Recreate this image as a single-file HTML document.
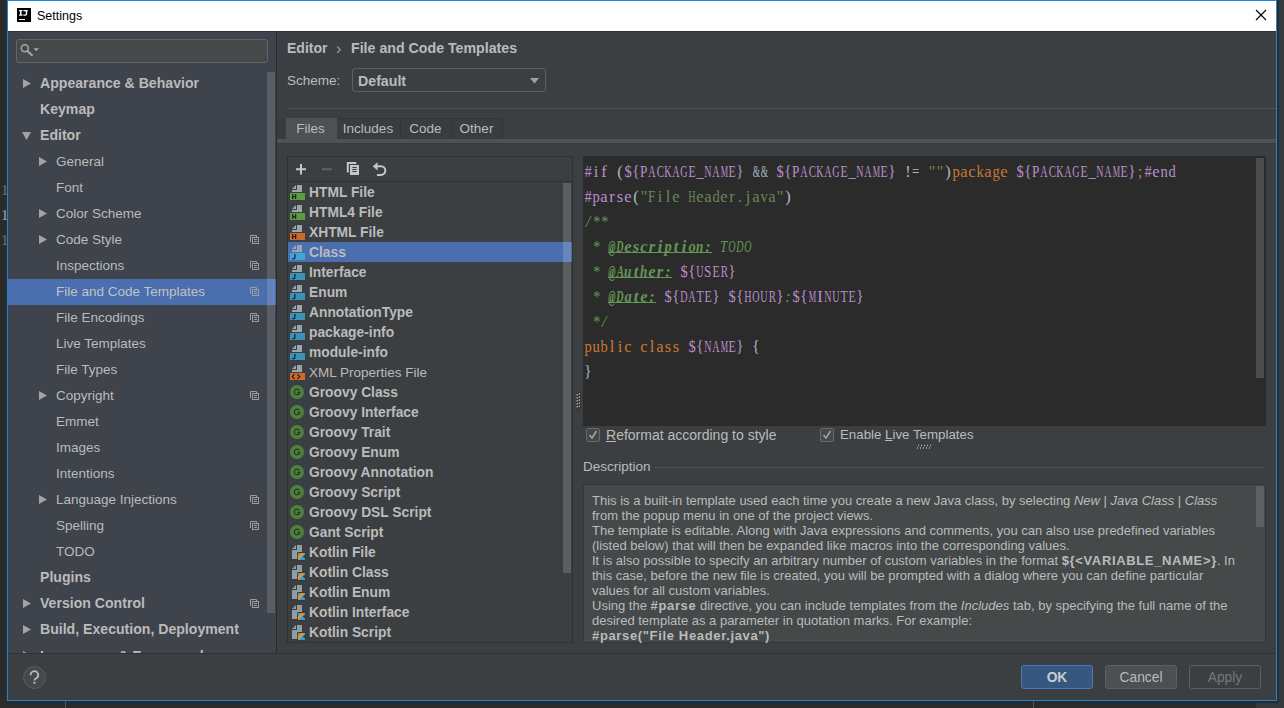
<!DOCTYPE html>
<html><head><meta charset="utf-8">
<style>
*{margin:0;padding:0;box-sizing:border-box}
html,body{width:1284px;height:708px;overflow:hidden;background:#2b2b2b;font-family:"Liberation Sans",sans-serif;color:#bbbbbb}
.a{position:absolute}
.t{position:absolute;white-space:nowrap}
.tr{position:absolute;left:8px;width:268px;height:26px;font-size:13.5px;line-height:26px;white-space:nowrap}
.tr.b{font-weight:bold;font-size:14.1px}
.tr.sel{background:#4b6eaf;color:#c2c2c2}
.tri{position:absolute;width:0;height:0;border-top:4.5px solid transparent;border-bottom:4.5px solid transparent;border-left:8px solid #a2a4a7;top:8px}
.trd{position:absolute;width:0;height:0;border-left:4.5px solid transparent;border-right:4.5px solid transparent;border-top:8px solid #a2a4a7;top:9px}
.pi{position:absolute;left:242px;top:8px}
.li{position:absolute;left:288px;width:284px;height:20px;font-size:13.8px;line-height:20px;font-weight:bold;white-space:nowrap}
.li.n{font-weight:normal;font-size:13.5px}
.li.sel{background:#4b6eaf}
.fi{position:absolute;left:2px;top:2px}
.code2{position:absolute;left:584px;font-family:"Liberation Serif",serif;font-size:16.5px;line-height:25px;white-space:pre;color:#a9b7c6}
.code2 b{font-weight:normal;display:inline-flex;justify-content:center;width:8px;overflow:visible}
.code2 i{font-style:normal;display:inline-block}
.code2 .cm i,.code2 .tag i{font-style:italic}
.code2 .tag i{font-weight:bold}
.dir{color:#b98fcb}
.kw{color:#cc7832}
.str{color:#6a8759}
.cm{color:#629755;font-style:italic}
.tag{color:#629755;font-weight:bold;font-style:italic;text-decoration:underline;text-decoration-skip-ink:none}
.desc{position:absolute;left:592px;font-size:13px;line-height:15px;white-space:nowrap;color:#bbbbbb}
.desc b{letter-spacing:0.65px}
</style></head><body>

<div class="t" style="left:1px;top:184px;font-family:'Liberation Serif',serif;font-size:15px;line-height:12px;color:#707070">1</div>
<div class="t" style="left:1px;top:209px;font-family:'Liberation Serif',serif;font-size:15px;line-height:12px;color:#a8a8a8">1</div>
<div class="t" style="left:1px;top:234px;font-family:'Liberation Serif',serif;font-size:15px;line-height:12px;color:#707070">1</div>
<div class="a" style="left:1277px;top:0;width:7px;height:708px;background:#37393b"></div>
<div class="a" style="left:1277px;top:0;width:2px;height:703px;background:#2c2d2e"></div>
<div class="a" style="left:1256px;top:701px;width:28px;height:7px;background:#37393b"></div>
<div class="a" style="left:7px;top:701px;width:1272px;height:2px;background:#2a2b2c"></div>
<div class="a" style="left:7px;top:0;width:1270px;height:701px;border:1px solid #1c87d9;background:#3c3f41"></div>
<div class="a" style="left:8px;top:1px;width:1268px;height:30px;background:#fff"></div>
<div class="a" style="left:17px;top:8px;width:14px;height:14px;background:#000"></div>
<svg class="a" style="left:17px;top:8px" width="14" height="14" viewBox="0 0 14 14"><path d="M2.1 2h3.3v1.2h-0.9v3.4h0.9v1.2H2.1V6.6h0.9V3.2h-0.9z M6.4 2h4.3v1.2h-0.5v2.9q0 1.7-1.7 1.7H6.3V6.6h1.8q0.6 0 0.6-0.6V3.2H6.4z" fill="#fff"/></svg>
<div class="a" style="left:19px;top:19px;width:6px;height:1px;background:#fff"></div>
<div class="t" style="left:37px;top:9px;font-size:12.5px;line-height:15px;color:#000">Settings</div>
<svg class="a" style="left:1255px;top:9px" width="12" height="12" viewBox="0 0 12 12"><path d="M1 1L11 11M11 1L1 11" stroke="#000" stroke-width="1.1"/></svg>
<div class="a" style="left:8px;top:31px;width:1268px;height:1px;background:#2f3133"></div>
<div class="a" style="left:8px;top:32px;width:268px;height:621px;background:#3e434c"></div>
<div class="a" style="left:276px;top:32px;width:1px;height:621px;background:#2b2b2b"></div>
<div class="a" style="left:8px;top:653px;width:1268px;height:1px;background:#2f3133"></div>
<div class="a" style="left:16px;top:39px;width:252px;height:24px;background:#45494a;border:1px solid #646464;border-radius:3px"></div>
<svg class="a" style="left:20px;top:43px" width="20" height="16" viewBox="0 0 20 16"><circle cx="4.8" cy="5.2" r="3.5" fill="none" stroke="#a8a8a8" stroke-width="1.5"/><path d="M7.4 7.9L12.6 12.8" stroke="#a8a8a8" stroke-width="2"/><path d="M13.5 5.3h5.5l-2.75 3z" fill="#a8a8a8"/></svg>
<div class="tr b" style="top:71px"><svg class="a" style="left:15px;top:8px" width="8" height="9" viewBox="0 0 8 9"><path d="M0 0L8 4.5L0 9z" fill="#a2a4a7"/></svg><span class="t" style="left:32px;top:-1px">Appearance &amp; Behavior</span></div>
<div class="tr b" style="top:97px"><span class="t" style="left:32px;top:-1px">Keymap</span></div>
<div class="tr b" style="top:123px"><svg class="a" style="left:14px;top:9px" width="9" height="8" viewBox="0 0 9 8"><path d="M0 0L9 0L4.5 8z" fill="#a2a4a7"/></svg><span class="t" style="left:32px;top:-1px">Editor</span></div>
<div class="tr" style="top:149px"><svg class="a" style="left:31px;top:8px" width="8" height="9" viewBox="0 0 8 9"><path d="M0 0L8 4.5L0 9z" fill="#a2a4a7"/></svg><span class="t" style="left:48px;top:0px">General</span></div>
<div class="tr" style="top:175px"><span class="t" style="left:48px;top:0px">Font</span></div>
<div class="tr" style="top:201px"><svg class="a" style="left:31px;top:8px" width="8" height="9" viewBox="0 0 8 9"><path d="M0 0L8 4.5L0 9z" fill="#a2a4a7"/></svg><span class="t" style="left:48px;top:0px">Color Scheme</span></div>
<div class="tr" style="top:227px"><svg class="a" style="left:31px;top:8px" width="8" height="9" viewBox="0 0 8 9"><path d="M0 0L8 4.5L0 9z" fill="#a2a4a7"/></svg><svg class="pi" width="11" height="11" viewBox="0 0 11 11"><path d="M0.5 7V0.5H6.5V2.5" fill="none" stroke="#9a9ea3" stroke-width="1"/><rect x="2.5" y="2.5" width="6" height="6" fill="none" stroke="#9a9ea3" stroke-width="1"/><path d="M4 4.5h3M4 6.5h3" stroke="#9a9ea3" stroke-width="1"/></svg><span class="t" style="left:48px;top:0px">Code Style</span></div>
<div class="tr" style="top:253px"><svg class="pi" width="11" height="11" viewBox="0 0 11 11"><path d="M0.5 7V0.5H6.5V2.5" fill="none" stroke="#9a9ea3" stroke-width="1"/><rect x="2.5" y="2.5" width="6" height="6" fill="none" stroke="#9a9ea3" stroke-width="1"/><path d="M4 4.5h3M4 6.5h3" stroke="#9a9ea3" stroke-width="1"/></svg><span class="t" style="left:48px;top:0px">Inspections</span></div>
<div class="tr sel" style="top:279px"><svg class="pi" width="11" height="11" viewBox="0 0 11 11"><path d="M0.5 7V0.5H6.5V2.5" fill="none" stroke="#9a9ea3" stroke-width="1"/><rect x="2.5" y="2.5" width="6" height="6" fill="none" stroke="#9a9ea3" stroke-width="1"/><path d="M4 4.5h3M4 6.5h3" stroke="#9a9ea3" stroke-width="1"/></svg><span class="t" style="left:48px;top:0px">File and Code Templates</span></div>
<div class="tr" style="top:305px"><svg class="pi" width="11" height="11" viewBox="0 0 11 11"><path d="M0.5 7V0.5H6.5V2.5" fill="none" stroke="#9a9ea3" stroke-width="1"/><rect x="2.5" y="2.5" width="6" height="6" fill="none" stroke="#9a9ea3" stroke-width="1"/><path d="M4 4.5h3M4 6.5h3" stroke="#9a9ea3" stroke-width="1"/></svg><span class="t" style="left:48px;top:0px">File Encodings</span></div>
<div class="tr" style="top:331px"><span class="t" style="left:48px;top:0px">Live Templates</span></div>
<div class="tr" style="top:357px"><span class="t" style="left:48px;top:0px">File Types</span></div>
<div class="tr" style="top:383px"><svg class="a" style="left:31px;top:8px" width="8" height="9" viewBox="0 0 8 9"><path d="M0 0L8 4.5L0 9z" fill="#a2a4a7"/></svg><svg class="pi" width="11" height="11" viewBox="0 0 11 11"><path d="M0.5 7V0.5H6.5V2.5" fill="none" stroke="#9a9ea3" stroke-width="1"/><rect x="2.5" y="2.5" width="6" height="6" fill="none" stroke="#9a9ea3" stroke-width="1"/><path d="M4 4.5h3M4 6.5h3" stroke="#9a9ea3" stroke-width="1"/></svg><span class="t" style="left:48px;top:0px">Copyright</span></div>
<div class="tr" style="top:409px"><span class="t" style="left:48px;top:0px">Emmet</span></div>
<div class="tr" style="top:435px"><span class="t" style="left:48px;top:0px">Images</span></div>
<div class="tr" style="top:461px"><span class="t" style="left:48px;top:0px">Intentions</span></div>
<div class="tr" style="top:487px"><svg class="a" style="left:31px;top:8px" width="8" height="9" viewBox="0 0 8 9"><path d="M0 0L8 4.5L0 9z" fill="#a2a4a7"/></svg><svg class="pi" width="11" height="11" viewBox="0 0 11 11"><path d="M0.5 7V0.5H6.5V2.5" fill="none" stroke="#9a9ea3" stroke-width="1"/><rect x="2.5" y="2.5" width="6" height="6" fill="none" stroke="#9a9ea3" stroke-width="1"/><path d="M4 4.5h3M4 6.5h3" stroke="#9a9ea3" stroke-width="1"/></svg><span class="t" style="left:48px;top:0px">Language Injections</span></div>
<div class="tr" style="top:513px"><svg class="pi" width="11" height="11" viewBox="0 0 11 11"><path d="M0.5 7V0.5H6.5V2.5" fill="none" stroke="#9a9ea3" stroke-width="1"/><rect x="2.5" y="2.5" width="6" height="6" fill="none" stroke="#9a9ea3" stroke-width="1"/><path d="M4 4.5h3M4 6.5h3" stroke="#9a9ea3" stroke-width="1"/></svg><span class="t" style="left:48px;top:0px">Spelling</span></div>
<div class="tr" style="top:539px"><span class="t" style="left:48px;top:0px">TODO</span></div>
<div class="tr b" style="top:565px"><span class="t" style="left:32px;top:-1px">Plugins</span></div>
<div class="tr b" style="top:591px"><svg class="a" style="left:15px;top:8px" width="8" height="9" viewBox="0 0 8 9"><path d="M0 0L8 4.5L0 9z" fill="#a2a4a7"/></svg><svg class="pi" width="11" height="11" viewBox="0 0 11 11"><path d="M0.5 7V0.5H6.5V2.5" fill="none" stroke="#9a9ea3" stroke-width="1"/><rect x="2.5" y="2.5" width="6" height="6" fill="none" stroke="#9a9ea3" stroke-width="1"/><path d="M4 4.5h3M4 6.5h3" stroke="#9a9ea3" stroke-width="1"/></svg><span class="t" style="left:32px;top:-1px">Version Control</span></div>
<div class="tr b" style="top:617px"><svg class="a" style="left:15px;top:8px" width="8" height="9" viewBox="0 0 8 9"><path d="M0 0L8 4.5L0 9z" fill="#a2a4a7"/></svg><span class="t" style="left:32px;top:-1px">Build, Execution, Deployment</span></div>
<div class="tr b" style="top:643px"><svg class="a" style="left:15px;top:8px" width="8" height="9" viewBox="0 0 8 9"><path d="M0 0L8 4.5L0 9z" fill="#a2a4a7"/></svg><span class="t" style="left:32px;top:0px">Languages &amp; Frameworks</span></div>
<div class="a" style="left:8px;top:653px;width:1268px;height:47px;background:#3c3f41"></div>
<div class="a" style="left:8px;top:653px;width:1268px;height:1px;background:#2f3133"></div>
<div class="a" style="left:267px;top:72px;width:8px;height:541px;background:rgba(255,255,255,0.14)"></div>
<div class="t" style="left:287px;top:40px;font-weight:bold;font-size:14px;line-height:16px">Editor</div>
<div class="t" style="left:336px;top:40px;font-size:16px;line-height:18px;color:#a0a0a0">&#8250;</div>
<div class="t" style="left:351px;top:40px;font-weight:bold;font-size:14.2px;line-height:16px">File and Code Templates</div>
<div class="t" style="left:287px;top:73px;font-size:13.5px;line-height:16px">Scheme:</div>
<div class="a" style="left:352px;top:68px;width:194px;height:24px;background:#3c3f41;border:1px solid #5e6060;border-radius:3px"></div>
<div class="t" style="left:358px;top:73px;font-weight:bold;font-size:14.2px;line-height:16px">Default</div>
<svg class="a" style="left:530px;top:78px" width="10" height="6" viewBox="0 0 10 6"><path d="M0 0h9l-4.5 5.5z" fill="#a0a0a0"/></svg>
<div class="a" style="left:287px;top:108px;width:989px;height:1px;background:#515151"></div>
<div class="a" style="left:277px;top:139px;width:999px;height:4px;background:#4e5254"></div>
<div class="a" style="left:277px;top:143px;width:999px;height:1px;background:#383a3c"></div>
<div class="a" style="left:277px;top:118px;width:9px;height:21px;background:#393c3e"></div>
<div class="a" style="left:286px;top:118px;width:51px;height:21px;background:#4e5254"></div>
<div class="t" style="left:285px;top:118px;width:51px;text-align:center;font-size:13.5px;line-height:22px">Files</div>
<div class="a" style="left:337px;top:118px;width:64px;height:21px;background:#3a3d3f;border:1px solid #323436;border-bottom:none;border-left:none"></div>
<div class="t" style="left:336px;top:118px;width:64px;text-align:center;font-size:13.5px;line-height:22px">Includes</div>
<div class="a" style="left:401px;top:118px;width:51px;height:21px;background:#3a3d3f;border:1px solid #323436;border-bottom:none;border-left:none"></div>
<div class="t" style="left:400px;top:118px;width:51px;text-align:center;font-size:13.5px;line-height:22px">Code</div>
<div class="a" style="left:452px;top:118px;width:51px;height:21px;background:#3a3d3f;border:1px solid #323436;border-bottom:none;border-left:none"></div>
<div class="t" style="left:451px;top:118px;width:51px;text-align:center;font-size:13.5px;line-height:22px">Other</div>
<div class="a" style="left:287px;top:156px;width:286px;height:487px;border:1px solid #2f3133;background:#3c3f41"></div>
<div class="a" style="left:288px;top:181px;width:284px;height:1px;background:#2f3133"></div>
<svg class="a" style="left:290px;top:158px" width="102" height="22" viewBox="0 0 102 22"><path d="M6 11.2h10M11 6v10.4" stroke="#c6c6c6" stroke-width="2"/><path d="M32 11.2h9.6" stroke="#606366" stroke-width="2"/><path d="M57.8 14.5V5H66.2" fill="none" stroke="#c6c6c6" stroke-width="2"/><rect x="60" y="7" width="9" height="10" fill="#c6c6c6"/><path d="M62.3 9.5h4.4M62.3 11.5h4.4M62.3 13.5h4.4" stroke="#3c3f41" stroke-width="1"/><path d="M82.8 8.3L87.6 4.2V12.4z" fill="#c6c6c6"/><path d="M86.5 8.3H91A4.3 4.3 0 0 1 91 16.9H87" fill="none" stroke="#c6c6c6" stroke-width="2"/></svg>
<div class="li" style="top:182px"><svg class="fi" width="16" height="17" viewBox="0 0 16 17"><path d="M2 5L6 1V5z M7 1H12V8H2V6H7z" fill="#9aa5ad"/><rect x="0" y="9" width="15" height="7" fill="#5b9c43"/><path d="M2 10h1.3v5H2z M5 10h1.3v5H5z M3 12h2v1.2H3z" fill="#1e2a1a"/></svg><span class="t" style="left:21px;top:1px">HTML File</span></div>
<div class="li" style="top:202px"><svg class="fi" width="16" height="17" viewBox="0 0 16 17"><path d="M2 5L6 1V5z M7 1H12V8H2V6H7z" fill="#9aa5ad"/><rect x="0" y="9" width="15" height="7" fill="#5b9c43"/><path d="M2 10h1.3v5H2z M5 10h1.3v5H5z M3 12h2v1.2H3z" fill="#1e2a1a"/></svg><span class="t" style="left:21px;top:1px">HTML4 File</span></div>
<div class="li" style="top:222px"><svg class="fi" width="16" height="17" viewBox="0 0 16 17"><path d="M2 5L6 1V5z M7 1H12V8H2V6H7z" fill="#9aa5ad"/><rect x="0" y="9" width="15" height="7" fill="#cc6a2c"/><path d="M2 10h1.3v5H2z M5 10h1.3v5H5z M3 12h2v1.2H3z" fill="#2a1a10"/></svg><span class="t" style="left:21px;top:1px">XHTML File</span></div>
<div class="li sel" style="top:242px"><svg class="fi" width="16" height="17" viewBox="0 0 16 17"><path d="M2 5L6 1V5z M7 1H12V8H2V6H7z" fill="#9aa5ad"/><rect x="0" y="9" width="15" height="7" fill="#42a3d6"/><path d="M4.3 10h1.3v3.6q0 1.6-1.6 1.6H2.2v-1.2h1.4q0.7 0 0.7-0.6z" fill="#12283a"/></svg><span class="t" style="left:21px;top:1px">Class</span></div>
<div class="li" style="top:262px"><svg class="fi" width="16" height="17" viewBox="0 0 16 17"><path d="M2 5L6 1V5z M7 1H12V8H2V6H7z" fill="#9aa5ad"/><rect x="0" y="9" width="15" height="7" fill="#3a93b6"/><path d="M4.3 10h1.3v3.6q0 1.6-1.6 1.6H2.2v-1.2h1.4q0.7 0 0.7-0.6z" fill="#12283a"/></svg><span class="t" style="left:21px;top:1px">Interface</span></div>
<div class="li" style="top:282px"><svg class="fi" width="16" height="17" viewBox="0 0 16 17"><path d="M2 5L6 1V5z M7 1H12V8H2V6H7z" fill="#9aa5ad"/><rect x="0" y="9" width="15" height="7" fill="#3a93b6"/><path d="M4.3 10h1.3v3.6q0 1.6-1.6 1.6H2.2v-1.2h1.4q0.7 0 0.7-0.6z" fill="#12283a"/></svg><span class="t" style="left:21px;top:1px">Enum</span></div>
<div class="li" style="top:302px"><svg class="fi" width="16" height="17" viewBox="0 0 16 17"><path d="M2 5L6 1V5z M7 1H12V8H2V6H7z" fill="#9aa5ad"/><rect x="0" y="9" width="15" height="7" fill="#3a93b6"/><path d="M4.3 10h1.3v3.6q0 1.6-1.6 1.6H2.2v-1.2h1.4q0.7 0 0.7-0.6z" fill="#12283a"/></svg><span class="t" style="left:21px;top:1px">AnnotationType</span></div>
<div class="li" style="top:322px"><svg class="fi" width="16" height="17" viewBox="0 0 16 17"><path d="M2 5L6 1V5z M7 1H12V8H2V6H7z" fill="#9aa5ad"/><rect x="0" y="9" width="15" height="7" fill="#3a93b6"/><path d="M4.3 10h1.3v3.6q0 1.6-1.6 1.6H2.2v-1.2h1.4q0.7 0 0.7-0.6z" fill="#12283a"/></svg><span class="t" style="left:21px;top:1px">package-info</span></div>
<div class="li" style="top:342px"><svg class="fi" width="16" height="17" viewBox="0 0 16 17"><path d="M2 5L6 1V5z M7 1H12V8H2V6H7z" fill="#9aa5ad"/><rect x="0" y="9" width="15" height="7" fill="#3a93b6"/><path d="M4.3 10h1.3v3.6q0 1.6-1.6 1.6H2.2v-1.2h1.4q0.7 0 0.7-0.6z" fill="#12283a"/></svg><span class="t" style="left:21px;top:1px">module-info</span></div>
<div class="li n" style="top:362px"><svg class="fi" width="16" height="17" viewBox="0 0 16 17"><path d="M2 5L6 1V5z M7 1H12V8H2V6H7z" fill="#9aa5ad"/><rect x="0" y="9" width="15" height="7" fill="#cc6a2c"/><path d="M4.6 10.2L2.2 12.6L4.6 15 M7.4 10.2L9.8 12.6L7.4 15" fill="none" stroke="#2a1a10" stroke-width="1.1"/></svg><span class="t" style="left:21px;top:1px">XML Properties File</span></div>
<div class="li" style="top:382px"><svg class="fi" width="16" height="17" viewBox="0 0 16 17"><circle cx="7" cy="8" r="7" fill="#4e803e"/><path d="M9.4 6.4A2.8 2.8 0 1 0 9.8 8.3H7.4" fill="none" stroke="#243a1d" stroke-width="1.2"/></svg><span class="t" style="left:21px;top:1px">Groovy Class</span></div>
<div class="li" style="top:402px"><svg class="fi" width="16" height="17" viewBox="0 0 16 17"><circle cx="7" cy="8" r="7" fill="#4e803e"/><path d="M9.4 6.4A2.8 2.8 0 1 0 9.8 8.3H7.4" fill="none" stroke="#243a1d" stroke-width="1.2"/></svg><span class="t" style="left:21px;top:1px">Groovy Interface</span></div>
<div class="li" style="top:422px"><svg class="fi" width="16" height="17" viewBox="0 0 16 17"><circle cx="7" cy="8" r="7" fill="#4e803e"/><path d="M9.4 6.4A2.8 2.8 0 1 0 9.8 8.3H7.4" fill="none" stroke="#243a1d" stroke-width="1.2"/></svg><span class="t" style="left:21px;top:1px">Groovy Trait</span></div>
<div class="li" style="top:442px"><svg class="fi" width="16" height="17" viewBox="0 0 16 17"><circle cx="7" cy="8" r="7" fill="#4e803e"/><path d="M9.4 6.4A2.8 2.8 0 1 0 9.8 8.3H7.4" fill="none" stroke="#243a1d" stroke-width="1.2"/></svg><span class="t" style="left:21px;top:1px">Groovy Enum</span></div>
<div class="li" style="top:462px"><svg class="fi" width="16" height="17" viewBox="0 0 16 17"><circle cx="7" cy="8" r="7" fill="#4e803e"/><path d="M9.4 6.4A2.8 2.8 0 1 0 9.8 8.3H7.4" fill="none" stroke="#243a1d" stroke-width="1.2"/></svg><span class="t" style="left:21px;top:1px">Groovy Annotation</span></div>
<div class="li" style="top:482px"><svg class="fi" width="16" height="17" viewBox="0 0 16 17"><circle cx="7" cy="8" r="7" fill="#4e803e"/><path d="M9.4 6.4A2.8 2.8 0 1 0 9.8 8.3H7.4" fill="none" stroke="#243a1d" stroke-width="1.2"/></svg><span class="t" style="left:21px;top:1px">Groovy Script</span></div>
<div class="li" style="top:502px"><svg class="fi" width="16" height="17" viewBox="0 0 16 17"><circle cx="7" cy="8" r="7" fill="#4e803e"/><path d="M9.4 6.4A2.8 2.8 0 1 0 9.8 8.3H7.4" fill="none" stroke="#243a1d" stroke-width="1.2"/></svg><span class="t" style="left:21px;top:1px">Groovy DSL Script</span></div>
<div class="li" style="top:522px"><svg class="fi" width="16" height="17" viewBox="0 0 16 17"><circle cx="7" cy="8" r="7" fill="#4e803e"/><path d="M9.4 6.4A2.8 2.8 0 1 0 9.8 8.3H7.4" fill="none" stroke="#243a1d" stroke-width="1.2"/></svg><span class="t" style="left:21px;top:1px">Gant Script</span></div>
<div class="li" style="top:542px"><svg class="fi" width="16" height="17" viewBox="0 0 16 17"><path d="M2 5L6 1V5z M7 1H12V8H7.5V15H2V6H7z" fill="#939ca3"/><rect x="7.5" y="8.5" width="8" height="8" fill="#2e3032"/><rect x="8" y="9" width="7" height="7" fill="#1fa3e6"/><path d="M8 12.4L11 9H15L8.8 16H8z" fill="#f7901e"/><path d="M15 10.9L12.9 12.5L15 14.1z" fill="#2c2e30"/></svg><span class="t" style="left:21px;top:1px">Kotlin File</span></div>
<div class="li" style="top:562px"><svg class="fi" width="16" height="17" viewBox="0 0 16 17"><path d="M2 5L6 1V5z M7 1H12V8H7.5V15H2V6H7z" fill="#939ca3"/><rect x="7.5" y="8.5" width="8" height="8" fill="#2e3032"/><rect x="8" y="9" width="7" height="7" fill="#1fa3e6"/><path d="M8 12.4L11 9H15L8.8 16H8z" fill="#f7901e"/><path d="M15 10.9L12.9 12.5L15 14.1z" fill="#2c2e30"/></svg><span class="t" style="left:21px;top:1px">Kotlin Class</span></div>
<div class="li" style="top:582px"><svg class="fi" width="16" height="17" viewBox="0 0 16 17"><path d="M2 5L6 1V5z M7 1H12V8H7.5V15H2V6H7z" fill="#939ca3"/><rect x="7.5" y="8.5" width="8" height="8" fill="#2e3032"/><rect x="8" y="9" width="7" height="7" fill="#1fa3e6"/><path d="M8 12.4L11 9H15L8.8 16H8z" fill="#f7901e"/><path d="M15 10.9L12.9 12.5L15 14.1z" fill="#2c2e30"/></svg><span class="t" style="left:21px;top:1px">Kotlin Enum</span></div>
<div class="li" style="top:602px"><svg class="fi" width="16" height="17" viewBox="0 0 16 17"><path d="M2 5L6 1V5z M7 1H12V8H7.5V15H2V6H7z" fill="#939ca3"/><rect x="7.5" y="8.5" width="8" height="8" fill="#2e3032"/><rect x="8" y="9" width="7" height="7" fill="#1fa3e6"/><path d="M8 12.4L11 9H15L8.8 16H8z" fill="#f7901e"/><path d="M15 10.9L12.9 12.5L15 14.1z" fill="#2c2e30"/></svg><span class="t" style="left:21px;top:1px">Kotlin Interface</span></div>
<div class="li" style="top:622px"><svg class="fi" width="16" height="17" viewBox="0 0 16 17"><path d="M2 5L6 1V5z M7 1H12V8H7.5V15H2V6H7z" fill="#939ca3"/><rect x="7.5" y="8.5" width="8" height="8" fill="#2e3032"/><rect x="8" y="9" width="7" height="7" fill="#1fa3e6"/><path d="M8 12.4L11 9H15L8.8 16H8z" fill="#f7901e"/><path d="M15 10.9L12.9 12.5L15 14.1z" fill="#2c2e30"/></svg><span class="t" style="left:21px;top:1px">Kotlin Script</span></div>
<div class="a" style="left:563px;top:183px;width:8px;height:390px;background:rgba(255,255,255,0.17)"></div>
<div class="a" style="left:583px;top:156px;width:683px;height:270px;background:#2b2b2b"></div>
<div class="a" style="left:1256px;top:158px;width:8px;height:220px;background:#4a4c4e"></div>
<div class="a" style="left:608px;top:252px;width:104px;height:1px;background:#629755"></div>
<div class="a" style="left:608px;top:277px;width:64px;height:1px;background:#629755"></div>
<div class="a" style="left:608px;top:302px;width:48px;height:1px;background:#629755"></div>
<div class="code2" style="top:159px"><span class="dir"><b class="c"><i style="transform:scaleX(0.88)">#</i></b><b class="c"><i>i</i></b><b class="c"><i>f</i></b></span><b class="c"> </b><b class="c"><i>(</i></b><span class="dir"><b class="c"><i style="transform:scaleX(0.88)">$</i></b><b class="c"><i style="transform:scaleX(0.92)">{</i></b><b class="c"><i style="transform:scaleX(0.80)">P</i></b><b class="c"><i style="transform:scaleX(0.61)">A</i></b><b class="c"><i style="transform:scaleX(0.66)">C</i></b><b class="c"><i style="transform:scaleX(0.61)">K</i></b><b class="c"><i style="transform:scaleX(0.61)">A</i></b><b class="c"><i style="transform:scaleX(0.61)">G</i></b><b class="c"><i style="transform:scaleX(0.72)">E</i></b><b class="c"><i style="transform:scaleX(0.88)">_</i></b><b class="c"><i style="transform:scaleX(0.61)">N</i></b><b class="c"><i style="transform:scaleX(0.61)">A</i></b><b class="c"><i style="transform:scaleX(0.50)">M</i></b><b class="c"><i style="transform:scaleX(0.72)">E</i></b><b class="c"><i style="transform:scaleX(0.92)">}</i></b></span><b class="c"> </b><b class="c"><i style="transform:scaleX(0.57)">&amp;</i></b><b class="c"><i style="transform:scaleX(0.57)">&amp;</i></b><b class="c"> </b><span class="dir"><b class="c"><i style="transform:scaleX(0.88)">$</i></b><b class="c"><i style="transform:scaleX(0.92)">{</i></b><b class="c"><i style="transform:scaleX(0.80)">P</i></b><b class="c"><i style="transform:scaleX(0.61)">A</i></b><b class="c"><i style="transform:scaleX(0.66)">C</i></b><b class="c"><i style="transform:scaleX(0.61)">K</i></b><b class="c"><i style="transform:scaleX(0.61)">A</i></b><b class="c"><i style="transform:scaleX(0.61)">G</i></b><b class="c"><i style="transform:scaleX(0.72)">E</i></b><b class="c"><i style="transform:scaleX(0.88)">_</i></b><b class="c"><i style="transform:scaleX(0.61)">N</i></b><b class="c"><i style="transform:scaleX(0.61)">A</i></b><b class="c"><i style="transform:scaleX(0.50)">M</i></b><b class="c"><i style="transform:scaleX(0.72)">E</i></b><b class="c"><i style="transform:scaleX(0.92)">}</i></b></span><b class="c"> </b><b class="c"><i>!</i></b><b class="c"><i style="transform:scaleX(0.78)">=</i></b><b class="c"> </b><span class="str"><b class="c"><i>&quot;</i></b><b class="c"><i>&quot;</i></b></span><b class="c"><i>)</i></b><span class="kw"><b class="c"><i style="transform:scaleX(0.88)">p</i></b><b class="c"><i>a</i></b><b class="c"><i>c</i></b><b class="c"><i style="transform:scaleX(0.88)">k</i></b><b class="c"><i>a</i></b><b class="c"><i style="transform:scaleX(0.88)">g</i></b><b class="c"><i>e</i></b></span><b class="c"> </b><span class="dir"><b class="c"><i style="transform:scaleX(0.88)">$</i></b><b class="c"><i style="transform:scaleX(0.92)">{</i></b><b class="c"><i style="transform:scaleX(0.80)">P</i></b><b class="c"><i style="transform:scaleX(0.61)">A</i></b><b class="c"><i style="transform:scaleX(0.66)">C</i></b><b class="c"><i style="transform:scaleX(0.61)">K</i></b><b class="c"><i style="transform:scaleX(0.61)">A</i></b><b class="c"><i style="transform:scaleX(0.61)">G</i></b><b class="c"><i style="transform:scaleX(0.72)">E</i></b><b class="c"><i style="transform:scaleX(0.88)">_</i></b><b class="c"><i style="transform:scaleX(0.61)">N</i></b><b class="c"><i style="transform:scaleX(0.61)">A</i></b><b class="c"><i style="transform:scaleX(0.50)">M</i></b><b class="c"><i style="transform:scaleX(0.72)">E</i></b><b class="c"><i style="transform:scaleX(0.92)">}</i></b></span><span class="kw"><b class="c"><i>;</i></b></span><span class="dir"><b class="c"><i style="transform:scaleX(0.88)">#</i></b><b class="c"><i>e</i></b><b class="c"><i style="transform:scaleX(0.88)">n</i></b><b class="c"><i style="transform:scaleX(0.88)">d</i></b></span></div>
<div class="code2" style="top:184px"><span class="dir"><b class="c"><i style="transform:scaleX(0.88)">#</i></b><b class="c"><i style="transform:scaleX(0.88)">p</i></b><b class="c"><i>a</i></b><b class="c"><i>r</i></b><b class="c"><i>s</i></b><b class="c"><i>e</i></b></span><b class="c"><i>(</i></b><span class="str"><b class="c"><i>&quot;</i></b><b class="c"><i style="transform:scaleX(0.80)">F</i></b><b class="c"><i>i</i></b><b class="c"><i>l</i></b><b class="c"><i>e</i></b><b class="c"> </b><b class="c"><i style="transform:scaleX(0.61)">H</i></b><b class="c"><i>e</i></b><b class="c"><i>a</i></b><b class="c"><i style="transform:scaleX(0.88)">d</i></b><b class="c"><i>e</i></b><b class="c"><i>r</i></b><b class="c"><i>.</i></b><b class="c"><i>j</i></b><b class="c"><i>a</i></b><b class="c"><i style="transform:scaleX(0.88)">v</i></b><b class="c"><i>a</i></b><b class="c"><i>&quot;</i></b></span><b class="c"><i>)</i></b></div>
<div class="code2" style="top:209px"><span class="cm"><b class="c"><i>/</i></b><b class="c"><i style="transform:scaleX(0.88)">*</i></b><b class="c"><i style="transform:scaleX(0.88)">*</i></b></span></div>
<div class="code2" style="top:234px"><span class="cm"><b class="c"> </b><b class="c"><i style="transform:scaleX(0.88)">*</i></b><b class="c"> </b></span><span class="tag"><b class="c"><i style="transform:scaleX(0.53)">@</i></b><b class="c"><i style="transform:scaleX(0.61)">D</i></b><b class="c"><i>e</i></b><b class="c"><i>s</i></b><b class="c"><i>c</i></b><b class="c"><i>r</i></b><b class="c"><i>i</i></b><b class="c"><i style="transform:scaleX(0.88)">p</i></b><b class="c"><i>t</i></b><b class="c"><i>i</i></b><b class="c"><i style="transform:scaleX(0.88)">o</i></b><b class="c"><i style="transform:scaleX(0.80)">n</i></b><b class="c"><i>:</i></b></span><span class="cm"><b class="c"> </b><b class="c"><i style="transform:scaleX(0.80)">T</i></b><b class="c"><i style="transform:scaleX(0.61)">O</i></b><b class="c"><i style="transform:scaleX(0.61)">D</i></b><b class="c"><i style="transform:scaleX(0.61)">O</i></b></span></div>
<div class="code2" style="top:259px"><span class="cm"><b class="c"> </b><b class="c"><i style="transform:scaleX(0.88)">*</i></b><b class="c"> </b></span><span class="tag"><b class="c"><i style="transform:scaleX(0.53)">@</i></b><b class="c"><i style="transform:scaleX(0.66)">A</i></b><b class="c"><i style="transform:scaleX(0.80)">u</i></b><b class="c"><i>t</i></b><b class="c"><i style="transform:scaleX(0.80)">h</i></b><b class="c"><i>e</i></b><b class="c"><i>r</i></b><b class="c"><i>:</i></b></span><b class="c"> </b><span class="dir"><b class="c"><i style="transform:scaleX(0.88)">$</i></b><b class="c"><i style="transform:scaleX(0.92)">{</i></b><b class="c"><i style="transform:scaleX(0.61)">U</i></b><b class="c"><i style="transform:scaleX(0.80)">S</i></b><b class="c"><i style="transform:scaleX(0.72)">E</i></b><b class="c"><i style="transform:scaleX(0.66)">R</i></b><b class="c"><i style="transform:scaleX(0.92)">}</i></b></span></div>
<div class="code2" style="top:284px"><span class="cm"><b class="c"> </b><b class="c"><i style="transform:scaleX(0.88)">*</i></b><b class="c"> </b></span><span class="tag"><b class="c"><i style="transform:scaleX(0.53)">@</i></b><b class="c"><i style="transform:scaleX(0.61)">D</i></b><b class="c"><i style="transform:scaleX(0.88)">a</i></b><b class="c"><i>t</i></b><b class="c"><i>e</i></b><b class="c"><i>:</i></b></span><b class="c"> </b><span class="dir"><b class="c"><i style="transform:scaleX(0.88)">$</i></b><b class="c"><i style="transform:scaleX(0.92)">{</i></b><b class="c"><i style="transform:scaleX(0.61)">D</i></b><b class="c"><i style="transform:scaleX(0.61)">A</i></b><b class="c"><i style="transform:scaleX(0.72)">T</i></b><b class="c"><i style="transform:scaleX(0.72)">E</i></b><b class="c"><i style="transform:scaleX(0.92)">}</i></b></span><b class="c"> </b><span class="dir"><b class="c"><i style="transform:scaleX(0.88)">$</i></b><b class="c"><i style="transform:scaleX(0.92)">{</i></b><b class="c"><i style="transform:scaleX(0.61)">H</i></b><b class="c"><i style="transform:scaleX(0.61)">O</i></b><b class="c"><i style="transform:scaleX(0.61)">U</i></b><b class="c"><i style="transform:scaleX(0.66)">R</i></b><b class="c"><i style="transform:scaleX(0.92)">}</i></b></span><span class="cm"><b class="c"><i>:</i></b></span><span class="dir"><b class="c"><i style="transform:scaleX(0.88)">$</i></b><b class="c"><i style="transform:scaleX(0.92)">{</i></b><b class="c"><i style="transform:scaleX(0.50)">M</i></b><b class="c"><i>I</i></b><b class="c"><i style="transform:scaleX(0.61)">N</i></b><b class="c"><i style="transform:scaleX(0.61)">U</i></b><b class="c"><i style="transform:scaleX(0.72)">T</i></b><b class="c"><i style="transform:scaleX(0.72)">E</i></b><b class="c"><i style="transform:scaleX(0.92)">}</i></b></span></div>
<div class="code2" style="top:309px"><span class="cm"><b class="c"> </b><b class="c"><i style="transform:scaleX(0.88)">*</i></b><b class="c"><i>/</i></b></span></div>
<div class="code2" style="top:334px"><span class="kw"><b class="c"><i style="transform:scaleX(0.88)">p</i></b><b class="c"><i style="transform:scaleX(0.88)">u</i></b><b class="c"><i style="transform:scaleX(0.88)">b</i></b><b class="c"><i>l</i></b><b class="c"><i>i</i></b><b class="c"><i>c</i></b><b class="c"> </b><b class="c"><i>c</i></b><b class="c"><i>l</i></b><b class="c"><i>a</i></b><b class="c"><i>s</i></b><b class="c"><i>s</i></b></span><b class="c"> </b><span class="dir"><b class="c"><i style="transform:scaleX(0.88)">$</i></b><b class="c"><i style="transform:scaleX(0.92)">{</i></b><b class="c"><i style="transform:scaleX(0.61)">N</i></b><b class="c"><i style="transform:scaleX(0.61)">A</i></b><b class="c"><i style="transform:scaleX(0.50)">M</i></b><b class="c"><i style="transform:scaleX(0.72)">E</i></b><b class="c"><i style="transform:scaleX(0.92)">}</i></b></span><b class="c"> </b><b class="c"><i style="transform:scaleX(0.92)">{</i></b></div>
<div class="code2" style="top:359px"><b class="c"><i style="transform:scaleX(0.92)">}</i></b></div>
<svg class="a" style="left:575px;top:391px" width="8" height="20" viewBox="0 0 8 20"><path d="M1.4 2.6L5.5 1.5V17L1.4 18z" fill="#2a2a2a" opacity="0.8"/><rect x="1.6" y="3.2" width="1.3" height="1.3" fill="#c8c8c8"/><rect x="3.7" y="2.4" width="1.3" height="1.3" fill="#c8c8c8"/><rect x="1.6" y="6.2" width="1.3" height="1.3" fill="#c8c8c8"/><rect x="3.7" y="5.4" width="1.3" height="1.3" fill="#c8c8c8"/><rect x="1.6" y="9.2" width="1.3" height="1.3" fill="#c8c8c8"/><rect x="3.7" y="8.4" width="1.3" height="1.3" fill="#c8c8c8"/><rect x="1.6" y="12.2" width="1.3" height="1.3" fill="#c8c8c8"/><rect x="3.7" y="11.4" width="1.3" height="1.3" fill="#c8c8c8"/><rect x="1.6" y="15.2" width="1.3" height="1.3" fill="#c8c8c8"/><rect x="3.7" y="14.4" width="1.3" height="1.3" fill="#c8c8c8"/></svg>
<div class="a" style="left:586px;top:428px;width:14px;height:14px;background:#43494a;border:1px solid #6b6b6b;border-radius:2px"></div>
<svg class="a" style="left:588px;top:430px" width="10" height="10" viewBox="0 0 10 10"><path d="M1.5 5l2.5 3 4.5-7" fill="none" stroke="#a9a9a9" stroke-width="1.4"/></svg>
<div class="t" style="left:606px;top:427px;font-size:14px;line-height:16px"><u>R</u>eformat according to style</div>
<div class="a" style="left:820px;top:428px;width:14px;height:14px;background:#43494a;border:1px solid #6b6b6b;border-radius:2px"></div>
<svg class="a" style="left:822px;top:430px" width="10" height="10" viewBox="0 0 10 10"><path d="M1.5 5l2.5 3 4.5-7" fill="none" stroke="#a9a9a9" stroke-width="1.4"/></svg>
<div class="t" style="left:840px;top:427px;font-size:13.3px;line-height:16px">Enable <u>L</u>ive Templates</div>
<svg class="a" style="left:916px;top:444px" width="16" height="5" viewBox="0 0 16 5"><path d="M1 4h1M4 4h1M7 4h1M10 4h1M13 4h1M2 1.5h1M5 1.5h1M8 1.5h1M11 1.5h1M14 1.5h1" stroke="#b0b0b0" stroke-width="1.4"/></svg>
<div class="t" style="left:583px;top:459px;font-size:13.5px;line-height:16px">Description</div>
<div class="a" style="left:655px;top:467px;width:610px;height:1px;background:#515151"></div>
<div class="a" style="left:583px;top:484px;width:683px;height:159px;background:#45494a;border:1px solid #333638"></div>
<div class="a" style="left:1256px;top:486px;width:8px;height:41px;background:#5e6162"></div>
<div class="a" style="left:584px;top:485px;width:672px;height:160px;overflow:hidden">
<div class="desc" style="left:8px;top:8px">This is a built-in template used each time you create a new Java class, by selecting <i>New</i> | <i>Java Class</i> | <i>Class</i></div>
<div class="desc" style="left:8px;top:23px">from the popup menu in one of the project views.</div>
<div class="desc" style="left:8px;top:38px">The template is editable. Along with Java expressions and comments, you can also use predefined variables</div>
<div class="desc" style="left:8px;top:53px">(listed below) that will then be expanded like macros into the corresponding values.</div>
<div class="desc" style="left:8px;top:68px">It is also possible to specify an arbitrary number of custom variables in the format <b>${&lt;VARIABLE_NAME&gt;}</b>. In</div>
<div class="desc" style="left:8px;top:83px">this case, before the new file is created, you will be prompted with a dialog where you can define particular</div>
<div class="desc" style="left:8px;top:98px">values for all custom variables.</div>
<div class="desc" style="left:8px;top:113px">Using the <b>#parse</b> directive, you can include templates from the <i>Includes</i> tab, by specifying the full name of the</div>
<div class="desc" style="left:8px;top:128px">desired template as a parameter in quotation marks. For example:</div>
<div class="desc" style="left:8px;top:143px"><b>#parse("File Header.java")</b></div>
</div>
<div class="a" style="left:23px;top:666px;width:23px;height:23px;border-radius:50%;background:#45494a;border:1px solid #5a5d5f"></div>
<svg class="a" style="left:23px;top:666px" width="23" height="23" viewBox="0 0 23 23"><path d="M7.6 9.2A3.8 3.8 0 1 1 13.4 12.2Q11.4 13.1 11.4 14.4" fill="none" stroke="#bdbdbd" stroke-width="1.7"/><rect x="10.4" y="15.8" width="2" height="1.8" fill="#bdbdbd"/></svg>
<div class="a" style="left:1021px;top:665px;width:72px;height:24px;background:#365880;border:1px solid #4a7ab0;border-radius:3px"></div>
<div class="t" style="left:1021px;top:666px;width:72px;text-align:center;font-size:13.8px;line-height:24px;color:#caccd0;font-weight:bold">OK</div>
<div class="a" style="left:1105px;top:665px;width:72px;height:24px;background:#4c5052;border:1px solid #5e6060;border-radius:3px"></div>
<div class="t" style="left:1105px;top:666px;width:72px;text-align:center;font-size:13.8px;line-height:24px;color:#bbbbbb;">Cancel</div>
<div class="a" style="left:1189px;top:665px;width:72px;height:24px;background:#3c3f41;border:1px solid #5e6060;border-radius:3px"></div>
<div class="t" style="left:1189px;top:666px;width:72px;text-align:center;font-size:13.8px;line-height:24px;color:#777777;">Apply</div>
<div class="a" style="left:65px;top:701px;width:1px;height:7px;background:#555"></div>
<div class="a" style="left:1033px;top:701px;width:1px;height:7px;background:#555"></div>
</body></html>
